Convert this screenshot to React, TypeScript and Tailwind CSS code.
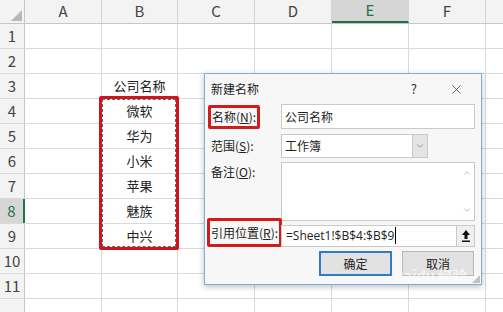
import { ChevronDown, ChevronUp, X } from "lucide-react";

const cols = [
  { name: "A", w: "w-[77px]" },
  { name: "B", w: "w-[76px]" },
  { name: "C", w: "w-[77px]" },
  { name: "D", w: "w-[77px]" },
  { name: "E", w: "w-[77px]" },
  { name: "F", w: "w-[77px]" },
];

const cellValues: Record<number, string> = {
  3: "公司名称",
  4: "微软",
  5: "华为",
  6: "小米",
  7: "苹果",
  8: "魅族",
  9: "中兴",
};

const rows = [1, 2, 3, 4, 5, 6, 7, 8, 9, 10, 11, 12];

const Sheet = () => (
  <div className="flex flex-col">
    <div className="flex h-[24px] bg-[#f3f3f3] border-b border-[#c6c6c6] text-[15px] text-[#444]">
      <div className="w-[25px] shrink-0 border-r border-[#c6c6c6] flex items-end justify-end p-[2px]">
        <div className="w-0 h-0 border-l-[11px] border-l-transparent border-b-[11px] border-b-[#b8b8b8]" />
      </div>
      {cols.map((c) => (
        <div
          key={c.name}
          className={`${c.w} shrink-0 flex items-center justify-center border-r border-[#d4d4d4] ${
            c.name === "E" ? "bg-[#d6d6d6] border-b-2 border-b-[#217346] text-[#217346]" : ""
          }`}
        >
          {c.name}
        </div>
      ))}
      <div className="flex-1" />
    </div>
    {rows.map((r) => (
      <div key={r} className="flex h-[25px] shrink-0 border-b border-[#dadada] text-[13px] text-[#222]">
        <div
          className={`w-[25px] shrink-0 flex items-center justify-center text-[15px] text-[#444] border-r border-[#c6c6c6] ${
            r === 8 ? "bg-[#d6d6d6] border-r-2 border-r-[#217346] text-[#217346]" : "bg-[#f3f3f3]"
          }`}
        >
          {r < 12 ? r : ""}
        </div>
        {cols.map((c) => (
          <div key={c.name} className={`${c.w} shrink-0 flex items-center justify-center border-r border-[#dadada]`}>
            {c.name === "B" ? cellValues[r] ?? "" : ""}
          </div>
        ))}
        <div className="flex-1" />
      </div>
    ))}
  </div>
);

const NewNameDialog = () => (
  <div className="absolute left-[204px] top-[73px] w-[278px] h-[212px] bg-[#f7f7f7] border border-[#7eaedb] shadow-[0_2px_6px_rgba(0,0,0,0.25)] text-[12px] text-[#222]">
    <div className="flex items-center h-[30px] pl-[6px] pr-[17px]">
      <span>新建名称</span>
      <span className="ml-auto mr-[32px] text-[13px] text-[#333]">?</span>
      <X size={15} strokeWidth={1.2} className="text-[#333]" />
    </div>

    <div className="flex flex-col pr-[6px]">
      <div className="flex items-center h-[25px]">
        <div className="w-[76px] shrink-0 pl-[3px]">
          <span className="inline-flex items-center h-[24px] px-[1px] border-[3px] border-[#d21c1c] rounded-[2px]">
            名称(<u>N</u>):
          </span>
        </div>
        <div className="flex-1 h-[25px] bg-white border border-[#c9c9c9] flex items-center px-[3px]">公司名称</div>
      </div>

      <div className="flex items-center h-[24px] mt-[5px]">
        <div className="w-[76px] shrink-0 pl-[6px]">
          范围(<u>S</u>):
        </div>
        <div className="w-[147px] h-[24px] bg-white border border-[#c9c9c9] flex items-center pl-[3px]">
          <span className="flex-1">工作簿</span>
          <div className="w-[15px] h-full bg-[#e4e4e4] border-l border-[#c9c9c9] flex items-center justify-center">
            <ChevronDown size={10} className="text-[#888]" />
          </div>
        </div>
      </div>

      <div className="flex items-start h-[59px] mt-[4px]">
        <div className="w-[76px] shrink-0 pl-[6px] pt-[1px]">
          备注(<u>O</u>):
        </div>
        <div className="flex-1 h-[59px] bg-white border border-[#c9c9c9] flex justify-end">
          <div className="w-[14px] flex flex-col items-center justify-between py-[5px] text-[#aaa]">
            <ChevronUp size={10} />
            <ChevronDown size={10} />
          </div>
        </div>
      </div>

      <div className="flex items-end h-[22px] mt-[4px]">
        <div className="w-[76px] shrink-0 pl-[2px]">
          <span className="inline-flex items-center h-[29px] px-[1px] border-[3px] border-[#d21c1c] rounded-[2px] whitespace-nowrap">
            引用位置(<u>R</u>):
          </span>
        </div>
        <div className="flex-1 h-[22px] bg-white border border-[#c9c9c9] flex items-center">
          <span className="flex-1 px-[4px] text-[12px] font-['Open_Sans','Noto_Sans_CJK_SC',sans-serif]">
            =Sheet1!$B$4:$B$9<span className="border-l border-black ml-[1px]" />
          </span>
          <div className="w-[18px] h-full bg-[#efefef] border-l border-[#c9c9c9] flex flex-col items-center justify-center">
            <svg width="10" height="14" viewBox="0 0 10 14">
              <path d="M5 1 L1 6 H3.5 V10 H6.5 V6 H9 Z" fill="#111" />
              <rect x="1" y="11.5" width="8" height="1.5" fill="#111" />
            </svg>
          </div>
        </div>
      </div>

      <div className="flex justify-end gap-[10px] mt-[4px] pr-[1px]">
        <div className="w-[73px] h-[25px] bg-[#e2e2e2] border-2 border-[#2f7ad0] flex items-center justify-center">确定</div>
        <div className="w-[72px] h-[25px] bg-[#e2e2e2] border border-[#b8b8b8] flex items-center justify-center">取消</div>
      </div>
    </div>

    <div className="absolute right-[14px] bottom-[-3px] text-[15px] font-bold text-white/60 tracking-tight">Baidu 经验</div>
    <div className="absolute right-[1px] bottom-[1px] w-0 h-0 border-l-[8px] border-l-transparent border-b-[8px] border-b-[#c3c3c3]" />
  </div>
);

export default function App() {
  return (
    <div className="relative w-[503px] h-[312px] overflow-hidden bg-white font-['Noto_Sans_CJK_SC','Noto_Sans',sans-serif]">
      <Sheet />
      <div className="absolute left-[99px] top-[96px] w-[80px] h-[154px] border-[3px] border-[#d0141c] rounded-[2px]">
        <div className="w-full h-full border border-dashed border-[#666]" />
      </div>
      <NewNameDialog />
    </div>
  );
}
